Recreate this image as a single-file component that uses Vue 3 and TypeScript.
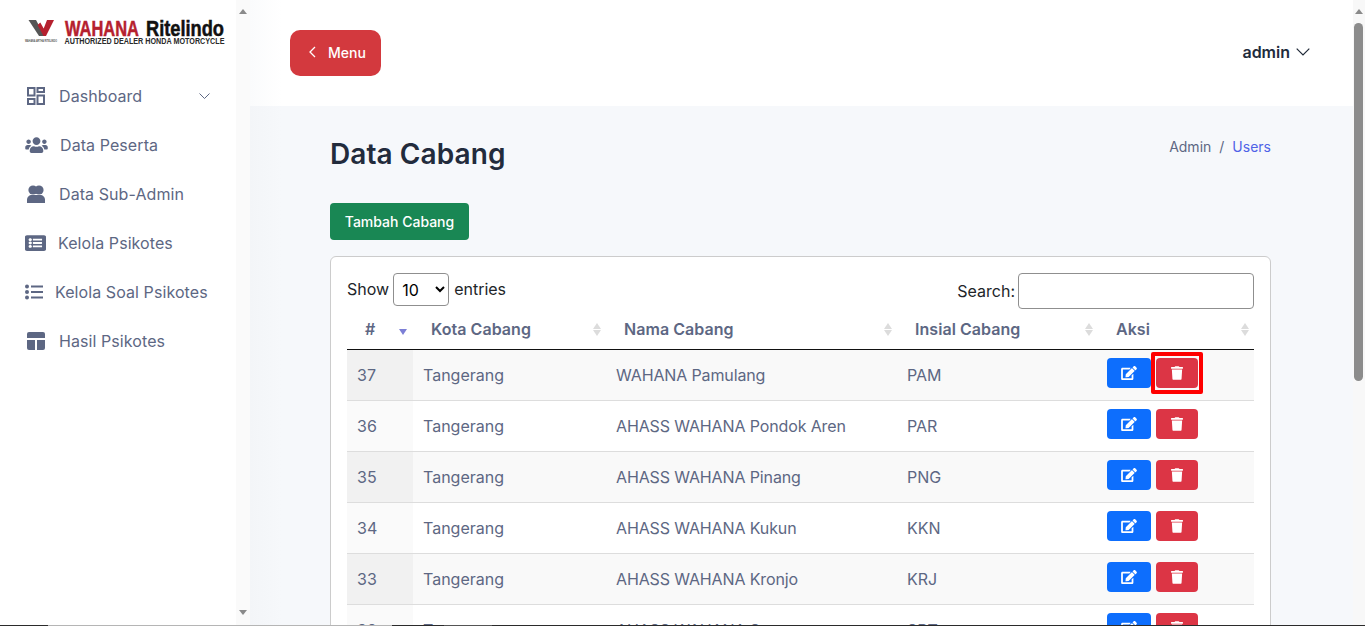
<template>
  <div class="page">
    <aside class="sidebar">
      <div class="side-inner">
        <div class="logo">
          <svg class="logo-svg" width="200" height="36" viewBox="0 0 200 36">
            <path d="M3.5 2H11l8.5 16H14z" fill="#555" />
            <path d="M12.5 7l2.8-2.4 3.4 6L22 2h7l-8 16h-2.5z" fill="#b5202e" />
            <text x="0" y="23.5" textLength="32" lengthAdjust="spacingAndGlyphs" class="logo-tiny">WAHANA ARTHA RITELINDO</text>
            <text x="40" y="18" textLength="74" lengthAdjust="spacingAndGlyphs" class="logo-red">WAHANA</text>
            <text x="121" y="18" textLength="78" lengthAdjust="spacingAndGlyphs" class="logo-black">Ritelindo</text>
            <text x="39.5" y="26" textLength="160" lengthAdjust="spacingAndGlyphs" class="logo-sub">AUTHORIZED DEALER HONDA MOTORCYCLE</text>
          </svg>
        </div>
        <nav class="nav">
          <a v-for="item in navItems" :key="item.label" class="nav-item" :class="item.cls">
            <span class="nav-icon">
              <svg v-if="item.icon === 'dash'" width="18" height="18" viewBox="0 0 18 18" fill="none" stroke="#5d6783" stroke-width="2">
                <rect x="1" y="1" width="6.5" height="7.5" />
                <rect x="10.5" y="1" width="6.5" height="4" />
                <rect x="1" y="12" width="6.5" height="5" />
                <rect x="10.5" y="8.5" width="6.5" height="8.5" />
              </svg>
              <svg v-else-if="item.icon === 'users'" width="23" height="18" viewBox="0 0 640 512" fill="#5d6783">
                <path d="M96 224c35.3 0 64-28.7 64-64s-28.7-64-64-64-64 28.7-64 64 28.7 64 64 64zm448 0c35.3 0 64-28.7 64-64s-28.7-64-64-64-64 28.7-64 64 28.7 64 64 64zm32 32h-64c-17.6 0-33.5 7.1-45.1 18.6 40.3 22.1 68.9 62 75.1 109.4h66c17.7 0 32-14.3 32-32v-32c0-35.3-28.7-64-64-64zm-256 0c61.9 0 112-50.1 112-112S381.9 32 320 32 208 82.1 208 144s50.1 112 112 112zm76.8 32h-8.3c-20.8 10-43.9 16-68.5 16s-47.6-6-68.5-16h-8.3C179.6 288 128 339.6 128 403.2V432c0 26.5 21.5 48 48 48h288c26.5 0 48-21.5 48-48v-28.8c0-63.6-51.6-115.2-115.2-115.2zm-223.7-13.4C161.5 263.1 145.6 256 128 256H64c-35.3 0-64 28.7-64 64v32c0 17.7 14.3 32 32 32h65.9c6.3-47.4 34.9-87.3 75.2-109.4z" />
              </svg>
              <svg v-else-if="item.icon === 'pair'" width="20" height="18" viewBox="0 0 20 18" fill="#5d6783">
                <circle cx="7" cy="5" r="4.6" />
                <circle cx="13" cy="5" r="4.6" />
                <path d="M1 18v-3c0-3 2-5 5-5h8c3 0 5 2 5 5v3z" />
              </svg>
              <svg v-else-if="item.icon === 'card'" width="21" height="18" viewBox="0 0 512 512" preserveAspectRatio="none" fill="#5d6783">
                <path d="M464 480H48c-26.51 0-48-21.49-48-48V80c0-26.51 21.49-48 48-48h416c26.51 0 48 21.49 48 48v352c0 26.51-21.49 48-48 48zM128 120c-22.091 0-40 17.909-40 40s17.909 40 40 40 40-17.909 40-40-17.909-40-40-40zm0 96c-22.091 0-40 17.909-40 40s17.909 40 40 40 40-17.909 40-40-17.909-40-40-40zm0 96c-22.091 0-40 17.909-40 40s17.909 40 40 40 40-17.909 40-40-17.909-40-40-40zm288-136v-32c0-6.627-5.373-12-12-12H204c-6.627 0-12 5.373-12 12v32c0 6.627 5.373 12 12 12h200c6.627 0 12-5.373 12-12zm0 96v-32c0-6.627-5.373-12-12-12H204c-6.627 0-12 5.373-12 12v32c0 6.627 5.373 12 12 12h200c6.627 0 12-5.373 12-12zm0 96v-32c0-6.627-5.373-12-12-12H204c-6.627 0-12 5.373-12 12v32c0 6.627 5.373 12 12 12h200c6.627 0 12-5.373 12-12z" />
              </svg>
              <svg v-else-if="item.icon === 'list'" width="18" height="16" viewBox="0 0 18 16" fill="#5d6783">
                <circle cx="2" cy="2.5" r="2" />
                <circle cx="2" cy="8" r="2" />
                <circle cx="2" cy="13.5" r="2" />
                <rect x="6" y="1.5" width="12" height="2" />
                <rect x="6" y="7" width="12" height="2" />
                <rect x="6" y="12.5" width="12" height="2" />
              </svg>
              <svg v-else width="18" height="18" viewBox="0 0 18 18" fill="#5d6783">
                <path d="M2 0h14a2 2 0 0 1 2 2v4H0V2a2 2 0 0 1 2-2z" />
                <path d="M0 8h8v10H2a2 2 0 0 1-2-2z" />
                <path d="M10 8h8v8a2 2 0 0 1-2 2h-6z" />
              </svg>
            </span>
            <span class="nav-label">{{ item.label }}</span>
            <svg v-if="item.icon === 'dash'" class="nav-caret" width="11" height="6" viewBox="0 0 11 6" fill="none" stroke="#5d6783">
              <path d="M.5.5l5 5 5-5" />
            </svg>
          </a>
        </nav>
      </div>
      <div class="scroll scroll-side">
        <i class="arrow-up"></i>
        <i class="arrow-down"></i>
      </div>
    </aside>

    <div class="main">
      <header class="topbar">
        <button class="menu-btn">
          <svg width="7" height="12" viewBox="0 0 7 12" fill="none" stroke="#fff" stroke-width="1.3">
            <path d="M6 1L1 6l5 5" />
          </svg>
          <span>Menu</span>
        </button>
        <div class="user">
          <span>admin</span>
          <svg width="14" height="8" viewBox="0 0 14 8" fill="none" stroke="#1f2937" stroke-width="1.2">
            <path d="M.7.7L7 7l6.3-6.3" />
          </svg>
        </div>
      </header>

      <main class="content">
        <div class="title-row">
          <h1>Data Cabang</h1>
          <div class="crumbs">
            <span>Admin</span>
            <span class="sep">/</span>
            <span class="crumb-active">Users</span>
          </div>
        </div>
        <button class="add-btn">Tambah Cabang</button>

        <section class="card">
          <div class="tools">
            <label class="show">
              Show
              <select class="entries">
                <option>10</option>
              </select>
              entries
            </label>
            <label class="search">
              Search:
              <input type="text" />
            </label>
          </div>
          <table>
            <colgroup>
              <col v-for="w in colWidths" :key="w" :style="{ width: w + 'px' }" />
            </colgroup>
            <thead>
              <tr>
                <th v-for="(h, i) in headers" :key="h">
                  {{ h }}
                  <span class="sort" :class="{ 'sort-on': i === 0 }">
                    <i v-if="i !== 0" class="sort-up"></i>
                    <i class="sort-down"></i>
                  </span>
                </th>
              </tr>
            </thead>
            <tbody>
              <tr v-for="(row, i) in rows" :key="row.id" :class="{ odd: i % 2 === 0 }">
                <td class="id-cell">{{ row.id }}</td>
                <td>{{ row.city }}</td>
                <td class="name-cell">{{ row.name }}</td>
                <td>{{ row.code }}</td>
                <td class="action-cell">
                  <div class="actions">
                    <button class="icon-btn btn-edit">
                      <svg width="16" height="14" viewBox="0 0 576 512" fill="#fff">
                        <path d="M402.6 83.2l90.2 90.2c3.8 3.8 3.8 10 0 13.8L274.4 405.6l-92.8 10.3c-12.4 1.4-22.9-9.1-21.5-21.5l10.3-92.8L388.8 83.2c3.8-3.8 10-3.8 13.8 0zm162-22.9l-48.8-48.8c-15.2-15.2-39.9-15.2-55.2 0l-35.4 35.4c-3.8 3.8-3.8 10 0 13.8l90.2 90.2c3.8 3.8 10 3.8 13.8 0l35.4-35.4c15.2-15.3 15.2-40 0-55.2zM384 346.2V448H64V128h229.8c3.2 0 6.2-1.3 8.5-3.5l40-40c7.6-7.6 2.2-20.5-8.5-20.5H48C21.5 64 0 85.5 0 112v352c0 26.5 21.5 48 48 48h352c26.5 0 48-21.5 48-48V306.2c0-10.7-12.9-16-20.5-8.5l-40 40c-2.2 2.3-3.5 5.3-3.5 8.5z" />
                      </svg>
                    </button>
                    <button class="icon-btn btn-del" :class="{ marked: i === 0 }">
                      <svg width="12" height="14" viewBox="0 0 448 512" fill="#fff">
                        <path d="M432 32H312l-9.4-18.7A24 24 0 0 0 281.1 0H166.8a23.72 23.72 0 0 0-21.4 13.3L136 32H16A16 16 0 0 0 0 48v32a16 16 0 0 0 16 16h416a16 16 0 0 0 16-16V48a16 16 0 0 0-16-16zM53.2 467a48 48 0 0 0 47.9 45h245.8a48 48 0 0 0 47.9-45L416 128H32z" />
                      </svg>
                    </button>
                  </div>
                </td>
              </tr>
            </tbody>
          </table>
        </section>
      </main>
      <div class="scroll scroll-main">
        <i class="arrow-up"></i>
        <i class="thumb"></i>
      </div>
    </div>

    <div class="edge-line">
      <i class="edge-a"></i>
      <i class="edge-b"></i>
      <i class="edge-c"></i>
      <i class="edge-d"></i>
      <i class="edge-e"></i>
    </div>
  </div>
</template>

<script setup lang="ts">
const navItems = [
  { label: 'Dashboard', icon: 'dash', cls: 'n-dash' },
  { label: 'Data Peserta', icon: 'users', cls: 'n-users' },
  { label: 'Data Sub-Admin', icon: 'pair', cls: 'n-pair' },
  { label: 'Kelola Psikotes', icon: 'card', cls: 'n-card' },
  { label: 'Kelola Soal Psikotes', icon: 'list', cls: 'n-list' },
  { label: 'Hasil Psikotes', icon: 'table', cls: 'n-table' },
]

const headers = ['#', 'Kota Cabang', 'Nama Cabang', 'Insial Cabang', 'Aksi']
const colWidths = [66, 193, 291, 201, 156]

const rows = [
  { id: 37, city: 'Tangerang', name: 'WAHANA Pamulang', code: 'PAM' },
  { id: 36, city: 'Tangerang', name: 'AHASS WAHANA Pondok Aren', code: 'PAR' },
  { id: 35, city: 'Tangerang', name: 'AHASS WAHANA Pinang', code: 'PNG' },
  { id: 34, city: 'Tangerang', name: 'AHASS WAHANA Kukun', code: 'KKN' },
  { id: 33, city: 'Tangerang', name: 'AHASS WAHANA Kronjo', code: 'KRJ' },
  { id: 32, city: 'Tangerang', name: 'AHASS WAHANA Sepatan', code: 'SPT' },
]
</script>

<style>
html,
body {
  margin: 0;
  overflow: hidden;
}
</style>

<style scoped>
.page {
  position: relative;
  display: flex;
  height: 626px;
  overflow: hidden;
  font-family: Inter, 'Noto Sans', sans-serif;
  color: #5d6783;
  background: #f6f8fb;
}

.sidebar {
  display: flex;
  flex: none;
  width: 250px;
  background: #fff;
}

.side-inner {
  flex: 1;
}

.logo {
  height: 71px;
  padding: 18px 0 0 25px;
  box-sizing: border-box;
}

.logo-svg {
  display: block;
  overflow: visible;
}

.logo-tiny {
  font: 700 2.6px 'Liberation Sans', sans-serif;
  fill: #555;
}

.logo-red {
  font: 700 22.3px 'Liberation Sans', sans-serif;
  fill: #b5202e;
  stroke: #b5202e;
  stroke-width: 0.5;
}

.logo-black {
  font: 700 22px 'Liberation Sans', sans-serif;
  fill: #111;
  stroke: #111;
  stroke-width: 0.5;
}

.logo-sub {
  font: 700 8.2px 'Liberation Sans', sans-serif;
  fill: #2a2a2a;
}

.nav-item {
  display: flex;
  align-items: center;
  height: 49px;
  font-size: 16px;
  font-weight: 400;
  letter-spacing: 0.08px;
  color: #5d6783;
}

.nav-icon {
  display: flex;
  align-items: center;
  justify-content: center;
}

.n-dash .nav-icon {
  margin: 0 14px 0 27px;
}

.n-users .nav-icon {
  margin: 0 12px 0 25px;
}

.n-pair .nav-icon {
  margin: 0 13px 0 26px;
}

.n-card .nav-icon {
  margin: 0 12px 0 25px;
}

.n-list .nav-icon {
  margin: 0 12px 0 25px;
}

.n-table .nav-icon {
  margin: 0 14px 0 27px;
}

.nav-caret {
  margin-left: auto;
  margin-right: 26px;
}

.scroll {
  position: relative;
  flex: none;
  background: #fafafa;
}

.scroll-side {
  width: 14px;
}

.scroll-main {
  width: 12px;
  background: #f8f8f8;
}

.arrow-up,
.arrow-down {
  position: absolute;
  left: 50%;
  margin-left: -4px;
  border-left: 4px solid transparent;
  border-right: 4px solid transparent;
}

.arrow-up {
  top: 9px;
  border-bottom: 5px solid #8a8a8a;
}

.arrow-down {
  bottom: 11px;
  border-top: 5px solid #8a8a8a;
}

.thumb {
  position: absolute;
  top: 23px;
  left: 0;
  width: 9px;
  margin-left: 1px;
  height: 358px;
  border-radius: 5px;
  background: #8c8c8c;
}

.main {
  display: flex;
  flex: 1;
  flex-wrap: wrap;
  align-content: flex-start;
  position: relative;
  min-width: 0;
  background: linear-gradient(90deg, #f3f5f8, #f6f8fb 32px);
}

.main > .scroll-main {
  position: absolute;
  top: 0;
  right: 0;
  bottom: 0;
}

.topbar {
  display: flex;
  flex: none;
  align-items: center;
  justify-content: space-between;
  width: 100%;
  height: 106px;
  padding: 0 55px 0 40px;
  box-sizing: border-box;
  background: linear-gradient(90deg, #fafbfc, #fff 32px);
}

.menu-btn {
  display: flex;
  align-items: center;
  gap: 12px;
  width: 91px;
  height: 46px;
  padding: 0 0 2px 19px;
  border: 0;
  border-radius: 10px;
  font: 500 14px Inter, sans-serif;
  color: #fff;
  background: #d3393e;
}

.user {
  display: flex;
  align-items: center;
  gap: 6px;
  margin-bottom: 2px;
  font-size: 16px;
  font-weight: 600;
  color: #222b3c;
}

.content {
  flex: none;
  width: 100%;
  padding: 0 94px 0 80px;
  box-sizing: border-box;
}

.title-row {
  display: flex;
  justify-content: space-between;
  align-items: center;
  height: 97px;
}

h1 {
  margin: 0 0 2px;
  font-size: 28px;
  font-weight: 600;
  letter-spacing: 0.08px;
  color: #222b3c;
}

.crumbs {
  display: flex;
  gap: 8px;
  margin-bottom: 16px;
  font-size: 14px;
}

.crumb-active {
  color: #4f63e7;
}

.add-btn {
  display: block;
  width: 139px;
  height: 37px;
  padding: 0;
  border: 0;
  border-radius: 4px;
  font: 500 14px Inter, sans-serif;
  color: #fff;
  background: #198754;
}

.card {
  height: 500px;
  margin-top: 16px;
  padding: 16px;
  box-sizing: border-box;
  border: 1px solid #ccc;
  border-radius: 6px;
  background: #fff;
}

.tools {
  display: flex;
  justify-content: space-between;
  height: 37px;
  font-size: 16px;
  color: #212529;
}

.show {
  display: flex;
  align-items: flex-start;
  gap: 4px;
  line-height: 33px;
}

.entries {
  width: 56px;
  height: 33px;
  margin-right: 1px;
  padding: 0 4px;
  border: 1px solid #8f8f8f;
  border-radius: 4px;
  font: 400 16px Inter, sans-serif;
  color: #000;
  background: #fff;
}

.search {
  display: flex;
  gap: 3px;
  line-height: 36px;
}

.search input {
  width: 236px;
  height: 36px;
  padding: 0;
  box-sizing: border-box;
  border: 1px solid #8f8f8f;
  border-radius: 4px;
  background: #fff;
}

table {
  width: 907px;
  table-layout: fixed;
  border-collapse: separate;
  border-spacing: 0;
  font-size: 16px;
}

th {
  position: relative;
  height: 40px;
  padding: 0 18px 1px;
  box-sizing: border-box;
  text-align: left;
  font-weight: 600;
  letter-spacing: 0.05px;
  border-bottom: 1px solid #111;
  color: #5d6783;
}

.sort {
  position: absolute;
  top: 13px;
  right: 5px;
  width: 8px;
}

.sort-on {
  right: auto;
  left: 52px;
  top: 19px;
}

.sort i {
  display: block;
  border-left: 4px solid transparent;
  border-right: 4px solid transparent;
}

.sort-up {
  margin-bottom: 1px;
  border-bottom: 6px solid #dcdcdc;
}

.sort-down {
  border-top: 6px solid #dcdcdc;
}

.sort-on .sort-down {
  border-top-color: #7c7fd6;
}

td {
  height: 51px;
  padding: 0 10px;
  box-sizing: border-box;
  border-bottom: 1px solid #ddd;
  color: #5d6783;
  background: #fff;
}

.odd td {
  background: #f9f9f9;
}

.name-cell {
  letter-spacing: -0.13px;
}

.id-cell {
  background: #fafafa;
}

.odd .id-cell {
  background: #f1f1f1;
}

.action-cell {
  padding-left: 9px;
}

.actions {
  display: flex;
  gap: 5px;
  margin-top: -4px;
}

.icon-btn {
  position: relative;
  display: flex;
  align-items: center;
  justify-content: center;
  width: 44px;
  height: 30px;
  padding: 0;
  border: 0;
  border-radius: 4px;
}

.btn-edit {
  background: #0d6efd;
}

.btn-del {
  width: 42px;
  background: #dc3545;
}

.marked::after {
  content: '';
  position: absolute;
  inset: -6px -5px;
  border: 4px solid #f00;
  border-radius: 2px;
}

.edge-line {
  position: absolute;
  left: 0;
  right: 0;
  bottom: 0;
  display: flex;
  height: 1px;
}

.edge-line i {
  display: block;
}

.edge-a {
  width: 48px;
  background: #2b2b2b;
}

.edge-b {
  width: 344px;
  background: #b5b5b5;
}

.edge-c {
  width: 52px;
  background: #2b2b2b;
}

.edge-d {
  width: 48px;
  background: #555;
}

.edge-e {
  flex: 1;
  background: #2b2b2b;
}
</style>
